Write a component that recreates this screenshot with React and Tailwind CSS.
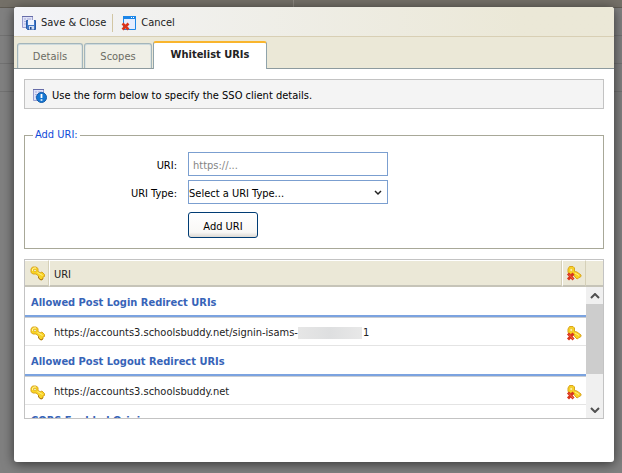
function KeyIcon() {
  return (
    <svg viewBox="0 0 16 16" className="size-4 shrink-0" aria-hidden="true">
      <path d="M1 4 2.500 2h3.500L8 3.500v3l2.200 1.200 1.800-.7L14.500 9.500v2L13 12v2l-2 1L8.500 13v-2L6 9H3L1 7.500z" fill="#f9d423" stroke="#d9a520" strokeWidth="1" />
      <path d="M2.500 6V4L4 3h2" fill="none" stroke="#fff3a0" strokeWidth="1" />
      <path d="M4 4.500h2v2H4z" fill="#fff" stroke="#d7a418" strokeWidth=".6" />
      <path d="m7.500 7.500 5 3" stroke="#fff08a" strokeWidth="1" />
      <path d="M8.500 11.500V13l2.500 2 2-1.200" fill="none" stroke="#a8781a" strokeWidth="1" />
    </svg>
  );
}

function KeyDeleteIcon() {
  return (
    <svg viewBox="0 0 16 16" className="size-4 shrink-0" aria-hidden="true">
      <path d="M2 4 3.500 1.500H7L8.500 3v3.500l2.500.500 4 3v1.500L12.500 13 11 14 9 12 7 9H3L2 7z" fill="#f9d423" stroke="#d9a520" strokeWidth="1" />
      <path d="M4 3.500h2.500v3H4z" fill="#fbeea0" stroke="#e8bd28" strokeWidth=".6" />
      <path d="m9 8 4 2.500" stroke="#fff08a" strokeWidth="1" />
      <path d="m2 8.500 5.500 6M7.500 8.500l-5.500 6" stroke="#d9341c" strokeWidth="2.800" />
      <path d="m3 9.500 4 4.500" stroke="#f47a5a" strokeWidth=".8" />
    </svg>
  );
}

function PageLines() {
  return (
    <>
      <path d="M1.500 1.500h10v11h-10z" fill="#dfe2f8" stroke="#9a9fd0" />
      <path d="M1 1.500h11" stroke="#666ca8" />
      <path d="M3 4h2M6 4h4M3 6.500h2M6 6.500h4M3 9h2M6 9h4" stroke="#a9aedb" />
    </>
  );
}

function SaveIcon() {
  return (
    <svg viewBox="0 0 16 16" className="size-4 shrink-0" aria-hidden="true">
      <PageLines />
      <path d="M5.500 5.500h9v9h-8l-1-1z" fill="#3f78c8" stroke="#285ba8" />
      <path d="M7 5h6v5H7z" fill="#eef4ff" />
      <path d="M8 11h5v3.500H8z" fill="#cfdcf2" />
      <path d="M9 12h1.500v2.500H9z" fill="#1f4687" />
    </svg>
  );
}

function CancelIcon() {
  return (
    <svg viewBox="0 0 16 16" className="size-4 shrink-0" aria-hidden="true">
      <path d="M2.500 1.500h12v13h-12z" fill="#e4edff" stroke="#1c86e8" />
      <path d="M2 1h13v3H2z" fill="#1c86e8" />
      <path d="M10 2.500h1M12 2.500h1" stroke="#fff" />
      <path d="m1.500 8.500 6 6M7.500 8.500l-6 6" stroke="#d9341c" strokeWidth="2.600" />
    </svg>
  );
}

function InfoIcon() {
  return (
    <svg viewBox="0 0 16 16" className="size-4 shrink-0" aria-hidden="true">
      <PageLines />
      <circle cx="9.500" cy="9.500" r="5" fill="#1677d2" stroke="#0f58a8" />
      <path d="M9.500 6v4M9.500 11.200v1.600" stroke="#fff" strokeWidth="1.800" />
    </svg>
  );
}

function Chevron({ up = false }) {
  return (
    <svg viewBox="0 0 10 6" className="h-[6px] w-[10px]" aria-hidden="true">
      <path d={up ? "m1 5 4-4 4 4" : "m1 1 4 4 4-4"} fill="none" stroke="#505050" strokeWidth="2" />
    </svg>
  );
}

function GroupRow({ title }) {
  return (
    <tr>
      <th colSpan={3} scope="rowgroup" className="border-b border-[#c9cdd3] p-0 text-left">
        <div className="flex h-[30px] items-center border-b-2 border-[#7ba3e0] pt-[3px] pl-[6px] font-bold text-[#3764b8]">{title}</div>
      </th>
    </tr>
  );
}

function UriRow({ children }) {
  return (
    <tr className="h-7">
      <td className="border-b border-[#e4e4e4] p-0 pt-[3px] pl-[5px]"><KeyIcon /></td>
      <td className="border-b border-[#e4e4e4] p-0 pt-[3px] pl-[5px] text-[#222]"><div className="flex items-center">{children}</div></td>
      <td className="border-b border-[#e4e4e4] p-0 pt-[3px]"><button type="button" aria-label="Delete URI" className="ml-1 block"><KeyDeleteIcon /></button></td>
    </tr>
  );
}

const TAB = "h-[25px] rounded-t-[3px] border border-b-0 border-[#a3b5bb] bg-[#f0efe6] pt-px text-[#6b6b63] shadow-[inset_0_1px_0_#cddadd,inset_1px_0_0_#dde4e2,inset_-1px_0_0_#dde4e2]";
const HEAD = "border-t border-b-2 border-t-white border-b-[#c6c4b8] p-0";

export default function App() {
  return (
    <div className="relative min-h-screen overflow-hidden bg-[#808080] pt-[7px] pr-2 pl-[14px] font-['DejaVu_Sans_Condensed','Noto_Sans',sans-serif] text-[11px] leading-4 text-black">
      <div className="absolute inset-x-0 top-0 flex flex-col" aria-hidden="true">
        <div className="h-2 border-b border-[#5f5b53] bg-[#747068]"><div className="h-[7px] w-[294px] border-r border-[#8b877f]" /></div>
        <div className="h-7 border-b border-[#727272]" />
        <div className="h-7 border-b border-[#727272]" />
        <div className="h-7 border-b border-[#727272]" />
      </div>
      <main className="relative rounded-[3px] bg-white pb-[43px] shadow-[0_2px_12px_rgba(0,0,0,0.6)]">
        <div className="flex h-[30px] items-center rounded-t-[3px] border-b border-[#d8cfb4] bg-linear-to-r from-[#f3f4f8] to-[#ebe8d7] to-85% pt-[3px] pl-[7px] text-[#222]">
          <button type="button" className="flex items-center gap-1"><SaveIcon />Save &amp; Close</button>
          <span className="mx-[6px] h-[18px] w-px bg-[#d2c6a4]" />
          <button type="button" className="flex items-center gap-1 pl-[2px]"><CancelIcon />Cancel</button>
        </div>

        <div role="tablist" className="flex h-8 items-end gap-px border-b border-[#8d9a9e] bg-[#ebe8d7] pl-[3px]">
          <button type="button" role="tab" aria-selected="false" className={TAB + " w-[66px]"}>Details</button>
          <button type="button" role="tab" aria-selected="false" className={TAB + " w-[68px]"}>Scopes</button>
          <button type="button" role="tab" aria-selected="true" className="-mb-px h-7 w-[114px] rounded-t-[3px] border-x border-t-2 border-x-[#8fa3ab] border-t-[#f9b52d] bg-white pb-[2px] font-bold text-[#222]">Whitelist URIs</button>
        </div>

        <div className="px-[10px] pt-[10px]">
          <p className="flex h-[30px] items-center gap-1 border border-[#c3c3c3] bg-[#f4f4f4] pt-[3px] pl-[7px]"><InfoIcon />Use the form below to specify the SSO client details.</p>

          <form onSubmit={(e) => e.preventDefault()}>
            <fieldset className="mt-[18px] border border-[#a8a898] px-2 pb-[10px]">
              <legend className="px-[2px] text-[#0f4ad8]">Add URI:</legend>
              <div className="mt-[9px] grid grid-cols-[144px_1fr] items-center gap-x-[11px] gap-y-1">
                <label htmlFor="uri" className="pt-[3px] text-right">URI:</label>
                <input id="uri" type="text" placeholder="https://..." className="h-6 w-[200px] border border-[#7b9fd0] px-1 pt-[2px] placeholder:text-[#858585]" />
                <label htmlFor="uri-type" className="pt-[3px] text-right">URI Type:</label>
                <div className="relative h-6 w-[200px]">
                  <select id="uri-type" className="size-full appearance-none border border-[#7b9fd0] bg-white pt-[3px]">
                    <option>Select a URI Type...</option>
                    <option>Allowed Post Login Redirect URIs</option>
                    <option>Allowed Post Logout Redirect URIs</option>
                  </select>
                  <svg viewBox="0 0 8 6" className="pointer-events-none absolute top-[10px] right-[6px] h-[6px] w-2" aria-hidden="true"><path d="m1 1 3 3 3-3" fill="none" stroke="#222" strokeWidth="1.500" /></svg>
                </div>
                <button type="submit" className="col-start-2 mt-1 h-[26px] w-[70px] rounded-[3px] border border-[#003c74] bg-linear-to-b from-white via-[#f9f8f6] via-80% to-[#dcd8d2] pt-[3px]">Add URI</button>
              </div>
            </fieldset>
          </form>

          <section className="mt-[10px] border border-[#c3c3c3]">
            <table className="w-full table-fixed border-separate border-spacing-0 bg-[#ebe8d7]">
              <colgroup>
                <col className="w-6" />
                <col />
                <col className="w-6" />
                <col className="w-[17px]" />
              </colgroup>
              <thead>
                <tr className="h-[27px]">
                  <th scope="col" aria-label="Key" className={HEAD + " border-r border-r-[#d5d0b8] pl-[5px]"}><KeyIcon /></th>
                  <th scope="col" className={HEAD + " border-r border-l border-r-[#d5d0b8] border-l-white pt-[3px] pl-1 text-left font-normal text-[#222]"}>URI</th>
                  <th scope="col" aria-label="Delete" className={HEAD + " border-r border-l border-r-[#d5d0b8] border-l-white pl-[3px]"}><KeyDeleteIcon /></th>
                  <td className={HEAD} />
                </tr>
              </thead>
            </table>
            <div className="flex h-[131px]">
              <div className="min-w-0 flex-1 overflow-hidden">
                <table className="w-full table-fixed border-separate border-spacing-0">
                  <colgroup>
                    <col className="w-6" />
                    <col />
                    <col className="w-6" />
                  </colgroup>
                  <tbody>
                    <GroupRow title="Allowed Post Login Redirect URIs" />
                    <UriRow>https://accounts3.schoolsbuddy.net/signin-isams-<span className="mr-px h-3 w-16 bg-linear-to-r from-[#e6e6e6] via-[#dedfe0] to-[#e8e8e8]" />1</UriRow>
                    <GroupRow title="Allowed Post Logout Redirect URIs" />
                    <UriRow>https://accounts3.schoolsbuddy.net</UriRow>
                    <GroupRow title="CORS Enabled Origins" />
                  </tbody>
                </table>
              </div>
              <div className="flex w-[17px] flex-col bg-[#f0f0f0]">
                <button type="button" aria-label="Scroll up" className="flex h-[17px] items-center justify-center"><Chevron up /></button>
                <div className="h-[70px] bg-[#cdcdcd]" />
                <button type="button" aria-label="Scroll down" className="mt-auto flex h-[17px] items-center justify-center"><Chevron /></button>
              </div>
            </div>
          </section>
        </div>
      </main>
    </div>
  );
}
